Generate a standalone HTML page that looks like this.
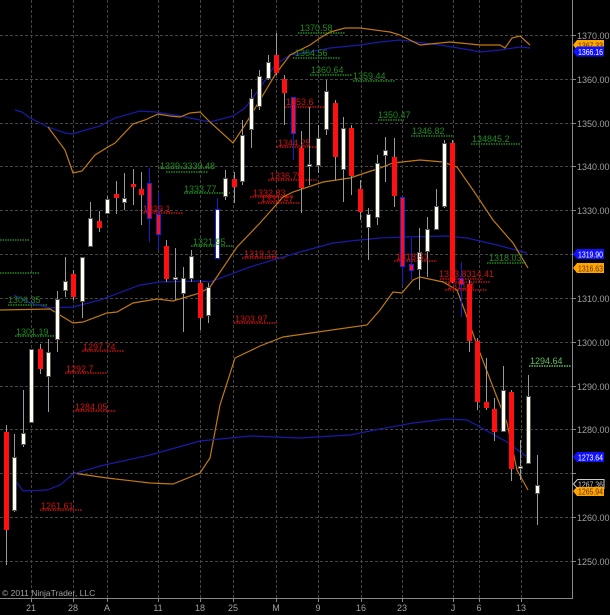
<!DOCTYPE html>
<html><head><meta charset="utf-8"><style>
html,body{margin:0;padding:0;background:#000;}
svg{display:block;}
text{font-family:"Liberation Sans",sans-serif;}
</style></head><body>
<svg width="610" height="615" viewBox="0 0 610 615" xmlns="http://www.w3.org/2000/svg">
<rect width="610" height="615" fill="#000"/>
<g stroke="#444" stroke-width="1" stroke-dasharray="3,2">
<line x1="0" y1="35.5" x2="572" y2="35.5"/>
<line x1="0" y1="79.5" x2="572" y2="79.5"/>
<line x1="0" y1="123.5" x2="572" y2="123.5"/>
<line x1="0" y1="166.5" x2="572" y2="166.5"/>
<line x1="0" y1="210.5" x2="572" y2="210.5"/>
<line x1="0" y1="254.5" x2="572" y2="254.5"/>
<line x1="0" y1="298.5" x2="572" y2="298.5"/>
<line x1="0" y1="342.5" x2="572" y2="342.5"/>
<line x1="0" y1="386.5" x2="572" y2="386.5"/>
<line x1="0" y1="429.5" x2="572" y2="429.5"/>
<line x1="0" y1="473.5" x2="572" y2="473.5"/>
<line x1="0" y1="517.5" x2="572" y2="517.5"/>
<line x1="0" y1="561.5" x2="572" y2="561.5"/>
<line x1="31.5" y1="0" x2="31.5" y2="598"/>
<line x1="73.5" y1="0" x2="73.5" y2="598"/>
<line x1="107.5" y1="0" x2="107.5" y2="598"/>
<line x1="158.5" y1="0" x2="158.5" y2="598"/>
<line x1="200.5" y1="0" x2="200.5" y2="598"/>
<line x1="233.5" y1="0" x2="233.5" y2="598"/>
<line x1="276.5" y1="0" x2="276.5" y2="598"/>
<line x1="318.5" y1="0" x2="318.5" y2="598"/>
<line x1="361.5" y1="0" x2="361.5" y2="598"/>
<line x1="402.5" y1="0" x2="402.5" y2="598"/>
<line x1="453.5" y1="0" x2="453.5" y2="598"/>
<line x1="479.5" y1="0" x2="479.5" y2="598"/>
<line x1="521.5" y1="0" x2="521.5" y2="598"/>
</g>

<g stroke="#1e8a1e" stroke-width="1.5" stroke-dasharray="1.5,1">
<line x1="298" y1="33" x2="345" y2="33"/>
<line x1="293" y1="58" x2="340" y2="58"/>
<line x1="310" y1="75" x2="352" y2="75"/>
<line x1="353" y1="81" x2="395" y2="81"/>
<line x1="378" y1="120" x2="404" y2="120"/>
<line x1="411" y1="136" x2="453" y2="136"/>
<line x1="471" y1="144" x2="520" y2="144"/>
<line x1="487" y1="263" x2="527" y2="263"/>
<line x1="529" y1="366" x2="571" y2="366" stroke="#5fbf5f"/>
<line x1="158" y1="168" x2="215" y2="168"/>
<line x1="166" y1="172" x2="208" y2="172"/>
<line x1="184" y1="193" x2="230" y2="193"/>
<line x1="191" y1="246" x2="233" y2="246"/>
<line x1="8" y1="305" x2="48" y2="305"/>
<line x1="15" y1="336" x2="57" y2="336"/>
<line x1="0" y1="240" x2="30" y2="240"/>
<line x1="0" y1="273" x2="40" y2="273"/>
</g>
<g stroke="#c01010" stroke-width="1.5" stroke-dasharray="1.5,1">
<line x1="285" y1="107" x2="327" y2="107"/>
<line x1="277" y1="147" x2="318" y2="147"/>
<line x1="268" y1="180" x2="318" y2="180"/>
<line x1="250" y1="197" x2="293" y2="197"/>
<line x1="258" y1="203" x2="300" y2="203"/>
<line x1="141" y1="213" x2="183" y2="213"/>
<line x1="242" y1="258" x2="285" y2="258"/>
<line x1="234" y1="323" x2="277" y2="323"/>
<line x1="82" y1="351" x2="124" y2="351"/>
<line x1="65" y1="373" x2="107" y2="373"/>
<line x1="73" y1="411" x2="116" y2="411"/>
<line x1="40" y1="510" x2="82" y2="510"/>
<line x1="394" y1="261" x2="437" y2="261"/>
<line x1="440" y1="279" x2="483" y2="279"/>
<line x1="443" y1="282" x2="490" y2="282"/>
<line x1="445" y1="290" x2="487" y2="290"/>
</g>

<g fill="none" stroke-width="1.2">
<polyline stroke="#1a1aa8" points="15,110 22,112 30,118 48,127 65,133 73,134 82,131 100,126 115,118 140,111 155,112 175,115 190,118 210,122 233,116 245,108 260,88 275,65 290,55 310,52 330,48 360,45 380,42 400,40 440,45 470,50 480,52 500,50 520,47 530,48"/>
<polyline stroke="#c07a10" points="48,127 65,150 73,173 82,171 95,155 108,147 115,143 133,124 145,120 158,114 170,116 180,117 190,113 200,112 210,122 233,143 245,125 260,100 275,75 290,55 310,45 320,38 330,32 345,28 360,28 390,32 400,35 420,45 450,42 480,45 500,45 505,48 512,38 520,36 530,45"/>
<polyline stroke="#1a1aa8" points="14,295 30,303 50,308 73,307 100,300 140,285 160,282 200,281 210,282 250,267 300,252 333,243 350,241 380,238 403,237 447,236 467,238 497,245 527,253"/>
<polyline stroke="#c07a10" points="0,310 50,309 73,323 83,322 107,313 117,312 133,303 157,299 173,301 200,293 210,287 237,247 260,223 283,197 293,192 323,182 350,178 380,168 393,163 420,160 443,162 457,167 473,190 493,220 513,243 528,268"/>
<polyline stroke="#c07a10" points="73,473 107,478 150,483 173,484 200,473 210,458 220,405 235,358 260,346 283,337 367,325 380,310 393,292 402,293 413,280 420,277 443,282 457,290 467,317 480,353 493,387 507,423 517,470 528,490"/>
<polyline stroke="#1a1aa8" points="15,480 23,491 47,490 60,485 73,474 100,466 150,455 200,441 250,436 300,438 350,435 380,429 413,423 447,419 467,420 480,427 507,442 527,457"/>
</g>

<g stroke="#999" stroke-width="1">
<line x1="6.5" y1="425" x2="6.5" y2="565"/>
<line x1="14.5" y1="434" x2="14.5" y2="512"/>
<line x1="23.5" y1="390" x2="23.5" y2="447"/>
<line x1="31.5" y1="349" x2="31.5" y2="422"/>
<line x1="40.5" y1="344" x2="40.5" y2="374"/>
<line x1="48.5" y1="339" x2="48.5" y2="412"/>
<line x1="57.5" y1="291" x2="57.5" y2="352"/>
<line x1="65.5" y1="257" x2="65.5" y2="297"/>
<line x1="73.5" y1="270" x2="73.5" y2="300"/>
<line x1="82.5" y1="257" x2="82.5" y2="318"/>
<line x1="90.5" y1="202" x2="90.5" y2="246"/>
<line x1="99.5" y1="211" x2="99.5" y2="232"/>
<line x1="107.5" y1="196" x2="107.5" y2="213"/>
<line x1="116.5" y1="181" x2="116.5" y2="214"/>
<line x1="124.5" y1="173" x2="124.5" y2="210"/>
<line x1="133.5" y1="169" x2="133.5" y2="205"/>
<line x1="141.5" y1="172" x2="141.5" y2="225"/>
<line x1="166.5" y1="240" x2="166.5" y2="282"/>
<line x1="175.5" y1="248" x2="175.5" y2="300"/>
<line x1="183.5" y1="267" x2="183.5" y2="332"/>
<line x1="191.5" y1="250" x2="191.5" y2="282"/>
<line x1="200.5" y1="280" x2="200.5" y2="330"/>
<line x1="208.5" y1="283" x2="208.5" y2="323"/>
<line x1="225.5" y1="170" x2="225.5" y2="200"/>
<line x1="234.5" y1="172" x2="234.5" y2="203"/>
<line x1="242.5" y1="120" x2="242.5" y2="185"/>
<line x1="251.5" y1="89" x2="251.5" y2="148"/>
<line x1="259.5" y1="70" x2="259.5" y2="110"/>
<line x1="268.5" y1="55" x2="268.5" y2="80"/>
<line x1="276.5" y1="33" x2="276.5" y2="75"/>
<line x1="284.5" y1="75" x2="284.5" y2="125"/>
<line x1="301.5" y1="131" x2="301.5" y2="213"/>
<line x1="309.5" y1="107" x2="309.5" y2="185"/>
<line x1="318.5" y1="125" x2="318.5" y2="173"/>
<line x1="326.5" y1="80" x2="326.5" y2="135"/>
<line x1="335.5" y1="100" x2="335.5" y2="180"/>
<line x1="343.5" y1="117" x2="343.5" y2="202"/>
<line x1="351.5" y1="125" x2="351.5" y2="195"/>
<line x1="360.5" y1="180" x2="360.5" y2="220"/>
<line x1="368.5" y1="208" x2="368.5" y2="260"/>
<line x1="377.5" y1="155" x2="377.5" y2="225"/>
<line x1="385.5" y1="137" x2="385.5" y2="182"/>
<line x1="394.5" y1="138" x2="394.5" y2="207"/>
<line x1="419.5" y1="228" x2="419.5" y2="290"/>
<line x1="427.5" y1="217" x2="427.5" y2="277"/>
<line x1="436.5" y1="189" x2="436.5" y2="230"/>
<line x1="444.5" y1="140" x2="444.5" y2="208"/>
<line x1="452.5" y1="140" x2="452.5" y2="283"/>
<line x1="469.5" y1="280" x2="469.5" y2="352"/>
<line x1="477.5" y1="338" x2="477.5" y2="410"/>
<line x1="486.5" y1="358" x2="486.5" y2="410"/>
<line x1="494.5" y1="398" x2="494.5" y2="441"/>
<line x1="503.5" y1="366" x2="503.5" y2="432"/>
<line x1="511.5" y1="390" x2="511.5" y2="481"/>
<line x1="520.5" y1="440" x2="520.5" y2="480"/>
<line x1="528.5" y1="375" x2="528.5" y2="463"/>
<line x1="537.5" y1="455" x2="537.5" y2="525"/>
</g>
<g stroke="#1a1ad0" stroke-width="1">
<line x1="149.5" y1="168" x2="149.5" y2="242"/>
<line x1="158.5" y1="193" x2="158.5" y2="250"/>
<line x1="217.5" y1="198" x2="217.5" y2="258"/>
<line x1="293.5" y1="97" x2="293.5" y2="160"/>
<line x1="402.5" y1="197" x2="402.5" y2="285"/>
<line x1="411.5" y1="238" x2="411.5" y2="280"/>
<line x1="461.5" y1="262" x2="461.5" y2="317"/>
</g>
<g fill="#ff1010">
<rect x="4" y="432" width="5" height="98"/>
<rect x="38" y="349" width="5" height="20"/>
<rect x="71" y="274" width="5" height="23"/>
<rect x="97" y="221" width="5" height="7"/>
<rect x="114" y="194" width="5" height="4"/>
<rect x="131" y="184" width="5" height="3"/>
<rect x="139" y="189" width="5" height="6"/>
<rect x="164" y="246" width="5" height="33"/>
<rect x="198" y="283" width="5" height="35"/>
<rect x="232" y="179" width="5" height="8"/>
<rect x="274" y="55" width="5" height="18"/>
<rect x="282" y="79" width="5" height="14"/>
<rect x="299" y="148" width="5" height="40"/>
<rect x="333" y="103" width="5" height="54"/>
<rect x="349" y="128" width="5" height="48"/>
<rect x="358" y="189" width="5" height="23"/>
<rect x="392" y="157" width="5" height="39"/>
<rect x="450" y="143" width="5" height="139"/>
<rect x="467" y="284" width="5" height="57"/>
<rect x="475" y="341" width="5" height="61"/>
<rect x="484" y="402" width="5" height="6"/>
<rect x="492" y="409" width="5" height="23"/>
<rect x="509" y="392" width="5" height="77"/>
</g>
<g fill="#ff1010" stroke="#2020e0" stroke-width="1">
<rect x="147.5" y="183.5" width="4" height="35"/>
<rect x="156.5" y="214.5" width="4" height="20"/>
<rect x="291.5" y="97.5" width="4" height="36"/>
<rect x="400.5" y="197.5" width="4" height="69"/>
<rect x="409.5" y="264.5" width="4" height="6"/>
<rect x="459.5" y="278.5" width="4" height="6"/>
</g>
<g fill="#fffff4" stroke="#555" stroke-width="1">
<rect x="12.5" y="457.5" width="4" height="53"/>
<rect x="21.5" y="433.5" width="4" height="11"/>
<rect x="29.5" y="349.5" width="4" height="73"/>
<rect x="46.5" y="352.5" width="4" height="24"/>
<rect x="55.5" y="299.5" width="4" height="40"/>
<rect x="63.5" y="281.5" width="4" height="9"/>
<rect x="80.5" y="257.5" width="4" height="44"/>
<rect x="88.5" y="218.5" width="4" height="28"/>
<rect x="105.5" y="199.5" width="4" height="14"/>
<rect x="122.5" y="198.5" width="4" height="4"/>
<rect x="173.5" y="277.5" width="4" height="2"/>
<rect x="181.5" y="278.5" width="4" height="15"/>
<rect x="189.5" y="256.5" width="4" height="22"/>
<rect x="206.5" y="287.5" width="4" height="28"/>
<rect x="223.5" y="178.5" width="4" height="18"/>
<rect x="240.5" y="135.5" width="4" height="46"/>
<rect x="249.5" y="98.5" width="4" height="31"/>
<rect x="257.5" y="76.5" width="4" height="30"/>
<rect x="266.5" y="62.5" width="4" height="16"/>
<rect x="307.5" y="164.5" width="4" height="2"/>
<rect x="316.5" y="138.5" width="4" height="27"/>
<rect x="324.5" y="91.5" width="4" height="38"/>
<rect x="341.5" y="128.5" width="4" height="41"/>
<rect x="366.5" y="214.5" width="4" height="13"/>
<rect x="375.5" y="163.5" width="4" height="54"/>
<rect x="383.5" y="150.5" width="4" height="5"/>
<rect x="417.5" y="252.5" width="4" height="17"/>
<rect x="425.5" y="229.5" width="4" height="22"/>
<rect x="434.5" y="206.5" width="4" height="23"/>
<rect x="442.5" y="143.5" width="4" height="63"/>
<rect x="501.5" y="390.5" width="4" height="41"/>
<rect x="518.5" y="466.5" width="4" height="2"/>
<rect x="526.5" y="396.5" width="4" height="67"/>
<rect x="535.5" y="485.5" width="4" height="8"/>
</g>
<rect x="215.5" y="209.5" width="4" height="49" fill="#fffff4" stroke="#2020e0"/>

<g font-size="9" fill="#1e8a1e">
<text x="300" y="31">1370.58</text>
<text x="295" y="56">1364.56</text>
<text x="311" y="73">1360.64</text>
<text x="353" y="79">1359.44</text>
<text x="378" y="118">1350.47</text>
<text x="412" y="134">1346.82</text>
<text x="472" y="142">134845.2</text>
<text x="489" y="261">1318.03</text>
<text x="530" y="364" fill="#5fbf5f">1294.64</text>
<text x="160" y="169">1339.3339.48</text>
<text x="184" y="192">1333.77</text>
<text x="193" y="245">1321.95</text>
<text x="8" y="303">1306.35</text>
<text x="16" y="335">1301.19</text>
</g>
<g font-size="9" fill="#d01010">
<text x="286" y="105">1353.6</text>
<text x="278" y="146">1344.25</text>
<text x="270" y="179">1336.75</text>
<text x="253" y="196">1332.83</text>
<text x="261" y="202">1331.47</text>
<text x="143" y="212">1329.1</text>
<text x="244" y="257">1319.12</text>
<text x="235" y="322">1303.97</text>
<text x="83" y="350">1297.74</text>
<text x="66" y="372">1292.7</text>
<text x="75" y="410">1284.05</text>
<text x="41" y="509">1261.61</text>
<text x="396" y="260">1318.51</text>
<text x="439" y="277">1313.8314.41</text>
<text x="447" y="289">1311.8</text>
</g>

<line x1="572.5" y1="0" x2="572.5" y2="598" stroke="#888"/>
<line x1="0" y1="598.5" x2="573" y2="598.5" stroke="#888"/>
<g stroke="#888">
<line x1="572" y1="35.5" x2="576" y2="35.5"/><line x1="572" y1="79.5" x2="576" y2="79.5"/><line x1="572" y1="123.5" x2="576" y2="123.5"/><line x1="572" y1="166.5" x2="576" y2="166.5"/><line x1="572" y1="210.5" x2="576" y2="210.5"/><line x1="572" y1="254.5" x2="576" y2="254.5"/><line x1="572" y1="298.5" x2="576" y2="298.5"/><line x1="572" y1="342.5" x2="576" y2="342.5"/><line x1="572" y1="386.5" x2="576" y2="386.5"/><line x1="572" y1="429.5" x2="576" y2="429.5"/><line x1="572" y1="473.5" x2="576" y2="473.5"/><line x1="572" y1="517.5" x2="576" y2="517.5"/><line x1="572" y1="561.5" x2="576" y2="561.5"/>
<line x1="31.5" y1="598" x2="31.5" y2="602"/><line x1="73.5" y1="598" x2="73.5" y2="602"/><line x1="107.5" y1="598" x2="107.5" y2="602"/><line x1="158.5" y1="598" x2="158.5" y2="602"/><line x1="200.5" y1="598" x2="200.5" y2="602"/><line x1="233.5" y1="598" x2="233.5" y2="602"/><line x1="276.5" y1="598" x2="276.5" y2="602"/><line x1="318.5" y1="598" x2="318.5" y2="602"/><line x1="361.5" y1="598" x2="361.5" y2="602"/><line x1="402.5" y1="598" x2="402.5" y2="602"/><line x1="453.5" y1="598" x2="453.5" y2="602"/><line x1="479.5" y1="598" x2="479.5" y2="602"/><line x1="521.5" y1="598" x2="521.5" y2="602"/>
</g>
<g font-size="9" fill="#a0a0a0">
<text x="577" y="39">1370.00</text>
<text x="577" y="83">1360.00</text>
<text x="577" y="127">1350.00</text>
<text x="577" y="170">1340.00</text>
<text x="577" y="214">1330.00</text>
<text x="577" y="302">1310.00</text>
<text x="577" y="346">1300.00</text>
<text x="577" y="390">1290.00</text>
<text x="577" y="433">1280.00</text>
<text x="577" y="521">1260.00</text>
<text x="577" y="565">1250.00</text>
</g>
<g font-size="9" fill="#a0a0a0" text-anchor="middle">
<text x="31" y="611">21</text><text x="73" y="611">28</text><text x="107" y="611">A</text><text x="158" y="611">11</text><text x="200" y="611">18</text><text x="233" y="611">25</text><text x="276" y="611">M</text><text x="318" y="611">9</text><text x="361" y="611">16</text><text x="402" y="611">23</text><text x="453" y="611">J</text><text x="479" y="611">6</text><text x="521" y="611">13</text>
</g>
<text x="2" y="596" font-size="8.5" fill="#a0a0a0">© 2011 NinjaTrader, LLC</text>

<g font-size="8">
<polygon points="573,45 577,40 604,40 604,50 577,50" fill="#ffa500"/>
<text x="578" y="48.5" fill="#603000" textLength="25" lengthAdjust="spacingAndGlyphs">1367.33</text>
<polygon points="573,51.5 577,46.5 604,46.5 604,56.5 577,56.5" fill="#1010ff"/>
<text x="578" y="55" fill="#fff" textLength="25" lengthAdjust="spacingAndGlyphs">1366.16</text>
<polygon points="573,254 577,249 604,249 604,259 577,259" fill="#1010ff"/>
<text x="578" y="257.5" fill="#fff" textLength="25" lengthAdjust="spacingAndGlyphs">1319.90</text>
<polygon points="573,268 577,263 604,263 604,273 577,273" fill="#ffa500"/>
<text x="578" y="271.5" fill="#603000" textLength="25" lengthAdjust="spacingAndGlyphs">1316.63</text>
<polygon points="573,457 577,452 604,452 604,462 577,462" fill="#1010ff"/>
<text x="578" y="460.5" fill="#fff" textLength="25" lengthAdjust="spacingAndGlyphs">1273.64</text>
<polygon points="573.5,484 577.5,479.5 604,479.5 604,488.5 577.5,488.5" fill="#000" stroke="#ccc"/>
<text x="578" y="487.5" fill="#ccc" textLength="25" lengthAdjust="spacingAndGlyphs">1267.36</text>
<polygon points="573,491 577,487 604,487 604,496 577,496" fill="#ffa500"/>
<text x="578" y="494.5" fill="#603000" textLength="25" lengthAdjust="spacingAndGlyphs">1265.94</text>
</g>
</svg>
</body></html>
